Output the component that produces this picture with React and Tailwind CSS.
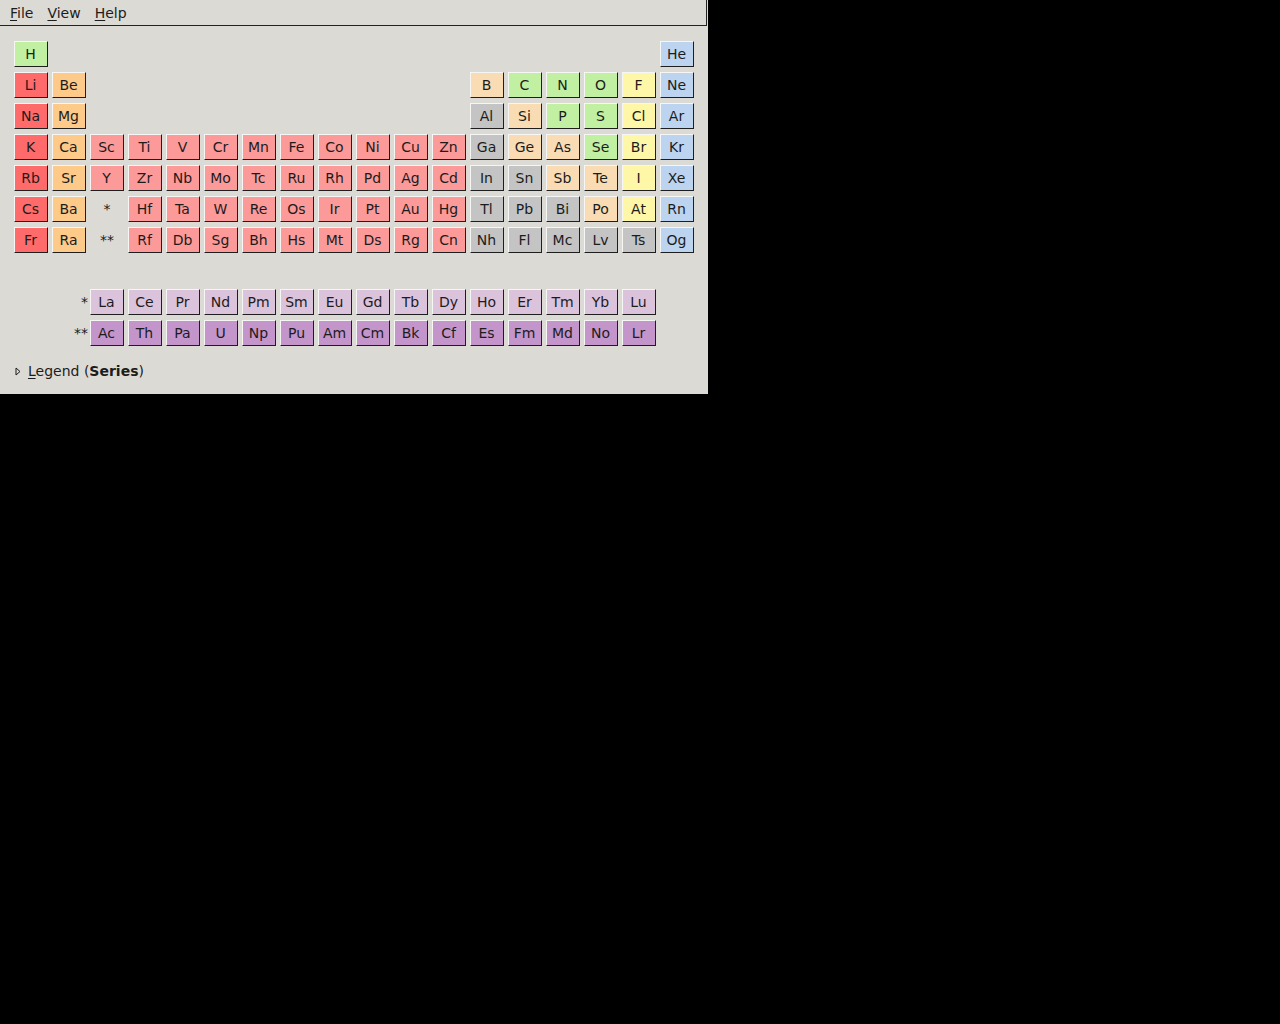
import React from 'react';

// category colours
const C = {
  nm: 'bg-[#c2f0a2]',
  ak: 'bg-[#ff6b6b]',
  ae: 'bg-[#fdca8a]',
  tm: 'bg-[#fc9a9a]',
  pt: 'bg-[#c4c4c4]',
  md: 'bg-[#f9dcb4]',
  hl: 'bg-[#fff7a8]',
  ng: 'bg-[#bcd4ef]',
  ln: 'bg-[#dcc3dc]',
  ac: 'bg-[#c495cb]',
};

// each row: 18 slots; null = empty, string = label
const rows = [
  [['H', 'nm'], null, null, null, null, null, null, null, null, null, null, null, null, null, null, null, null, ['He', 'ng']],
  [['Li', 'ak'], ['Be', 'ae'], null, null, null, null, null, null, null, null, null, null, ['B', 'md'], ['C', 'nm'], ['N', 'nm'], ['O', 'nm'], ['F', 'hl'], ['Ne', 'ng']],
  [['Na', 'ak'], ['Mg', 'ae'], null, null, null, null, null, null, null, null, null, null, ['Al', 'pt'], ['Si', 'md'], ['P', 'nm'], ['S', 'nm'], ['Cl', 'hl'], ['Ar', 'ng']],
  [['K', 'ak'], ['Ca', 'ae'], ['Sc', 'tm'], ['Ti', 'tm'], ['V', 'tm'], ['Cr', 'tm'], ['Mn', 'tm'], ['Fe', 'tm'], ['Co', 'tm'], ['Ni', 'tm'], ['Cu', 'tm'], ['Zn', 'tm'], ['Ga', 'pt'], ['Ge', 'md'], ['As', 'md'], ['Se', 'nm'], ['Br', 'hl'], ['Kr', 'ng']],
  [['Rb', 'ak'], ['Sr', 'ae'], ['Y', 'tm'], ['Zr', 'tm'], ['Nb', 'tm'], ['Mo', 'tm'], ['Tc', 'tm'], ['Ru', 'tm'], ['Rh', 'tm'], ['Pd', 'tm'], ['Ag', 'tm'], ['Cd', 'tm'], ['In', 'pt'], ['Sn', 'pt'], ['Sb', 'md'], ['Te', 'md'], ['I', 'hl'], ['Xe', 'ng']],
  [['Cs', 'ak'], ['Ba', 'ae'], '*', ['Hf', 'tm'], ['Ta', 'tm'], ['W', 'tm'], ['Re', 'tm'], ['Os', 'tm'], ['Ir', 'tm'], ['Pt', 'tm'], ['Au', 'tm'], ['Hg', 'tm'], ['Tl', 'pt'], ['Pb', 'pt'], ['Bi', 'pt'], ['Po', 'md'], ['At', 'hl'], ['Rn', 'ng']],
  [['Fr', 'ak'], ['Ra', 'ae'], '**', ['Rf', 'tm'], ['Db', 'tm'], ['Sg', 'tm'], ['Bh', 'tm'], ['Hs', 'tm'], ['Mt', 'tm'], ['Ds', 'tm'], ['Rg', 'tm'], ['Cn', 'tm'], ['Nh', 'pt'], ['Fl', 'pt'], ['Mc', 'pt'], ['Lv', 'pt'], ['Ts', 'pt'], ['Og', 'ng']],
];

const lan = ['La', 'Ce', 'Pr', 'Nd', 'Pm', 'Sm', 'Eu', 'Gd', 'Tb', 'Dy', 'Ho', 'Er', 'Tm', 'Yb', 'Lu'];
const act = ['Ac', 'Th', 'Pa', 'U', 'Np', 'Pu', 'Am', 'Cm', 'Bk', 'Cf', 'Es', 'Fm', 'Md', 'No', 'Lr'];

function Cell({ sym, cat }) {
  return (
    <div
      className={`h-[26px] w-[34px] flex items-center justify-center pt-[1px] pr-[1px] border border-t-[#f6f6f4] border-l-[#f6f6f4] border-b-[#1e1e1e] border-r-[#1e1e1e] text-[14px] text-[#1c1c1c] ${C[cat]}`}
    >
      {sym}
    </div>
  );
}

function Slot({ item, align }) {
  if (!item) return <div className="h-[26px] w-[34px]" />;
  if (typeof item === 'string') {
    return (
      <div className={`h-[26px] flex items-center text-[14px] text-[#1c1c1c] ${align === 'right' ? 'w-[36px] justify-end' : 'w-[34px] justify-center'}`}>
        {item}
      </div>
    );
  }
  return <Cell sym={item[0]} cat={item[1]} />;
}

function Menu({ label }) {
  return (
    <span className="px-[5px]">
      <span className="underline underline-offset-2">{label[0]}</span>
      {label.slice(1)}
    </span>
  );
}

export default function App() {
  const lanRow = [null, '*', ...lan.map((s) => [s, 'ln'])];
  const actRow = [null, '**', ...act.map((s) => [s, 'ac'])];

  return (
    <div className="min-h-screen w-full bg-black" style={{ fontFamily: '"DejaVu Sans", sans-serif' }}>
      <div className="w-[708px] h-[394px] bg-[#dcdad5] flex flex-col">
        {/* menu bar */}
        <div className="h-[26px] w-[707px] border-b border-r border-[#222] flex items-center pl-[5px] pt-[2px] text-[14px] text-[#1c1c1c] gap-[4px]">
          <Menu label="File" />
          <Menu label="View" />
          <Menu label="Help" />
        </div>

        {/* table */}
        <div className="pl-[14px] pt-[15px] grid grid-cols-[repeat(18,34px)] gap-x-[4px] gap-y-[5px]">
          {rows.map((row, r) =>
            row.map((item, c) => <Slot key={`${r}-${c}`} item={item} />)
          )}
          {Array.from({ length: 18 }).map((_, i) => (
            <div key={`sp-${i}`} className="h-[26px]" />
          ))}
          {lanRow.map((item, c) => (
            <Slot key={`l-${c}`} item={item} align="right" />
          ))}
          <div className="h-[26px]" />
          {actRow.map((item, c) => (
            <Slot key={`a-${c}`} item={item} align="right" />
          ))}
          <div className="h-[26px]" />
        </div>

        {/* legend expander */}
        <div className="flex items-center pl-[15px] pt-[15px] text-[14px] text-[#1c1c1c]">
          <svg width="7" height="9" viewBox="0 0 7 9" className="mr-[6px]">
            <path d="M1 1 L5 4.5 L1 8 Z" fill="#dcdad5" stroke="#1c1c1c" strokeWidth="1" />
          </svg>
          <span>
            <span className="underline underline-offset-2">L</span>egend (<b>Series</b>)
          </span>
        </div>
      </div>
    </div>
  );
}
